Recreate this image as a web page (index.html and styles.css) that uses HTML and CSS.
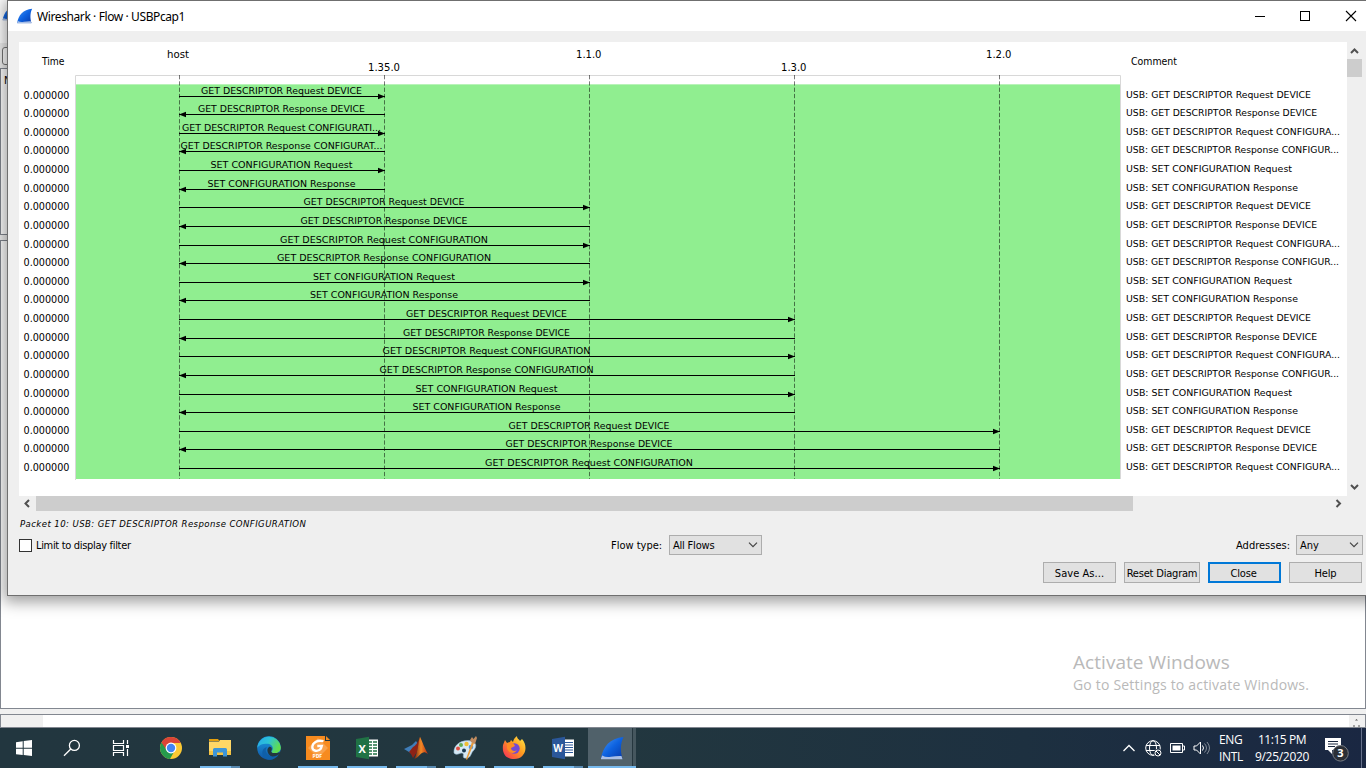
FILE: index.html
```html
<!DOCTYPE html>
<html lang="en">
<head>
<meta charset="utf-8">
<title>Wireshark · Flow · USBPcap1</title>
<link rel="stylesheet" href="styles.css">
</head>
<body>
<svg width="0" height="0" class="defs">
  <defs>
    <linearGradient id="fin" x1="0" y1="0" x2="1" y2="1"><stop offset="0" stop-color="#4a98f4"/><stop offset=".5" stop-color="#0d62e0"/><stop offset="1" stop-color="#0738a8"/></linearGradient>
    <linearGradient id="edgeA" x1="0" y1="0" x2="1" y2=".4"><stop offset="0" stop-color="#28a8ea"/><stop offset=".5" stop-color="#2cc3d8"/><stop offset="1" stop-color="#5fdc50"/></linearGradient>
    <linearGradient id="edgeB" x1="0" y1="0" x2="0" y2="1"><stop offset="0" stop-color="#1b9de2"/><stop offset="1" stop-color="#1055a5"/></linearGradient>
    <linearGradient id="fox" x1="1" y1="0" x2="0" y2="1"><stop offset="0" stop-color="#fff04a"/><stop offset=".45" stop-color="#ff9a1f"/><stop offset="1" stop-color="#f5245c"/></linearGradient>
    <linearGradient id="mat" x1="0" y1="0" x2="1" y2="0"><stop offset="0" stop-color="#6b1d12"/><stop offset=".5" stop-color="#f58a25"/><stop offset="1" stop-color="#b52a12"/></linearGradient>
    <symbol id="shark" viewBox="0 0 24 24"><path d="M1 22.500C2.500 11 10 2 23.500 1C20 8 20.500 16 22.500 22.500Z" fill="url(#fin)"/><path d="M1 22.500L2.200 19.500Q6 21.800 11 20.800T21.500 20L22.500 23.300H1Z" fill="#a9bfe6"/></symbol>
  </defs>
</svg>
<div class="desktop">
  <div class="backdrop">
    <div class="bd-head"><svg class="bd-fin" width="16" height="16"><use href="#shark"/></svg></div>
    <div class="bd-tools"><div class="bd-field"></div></div>
    <div class="bd-list">No.</div>
    <div class="bd-details">
      <div class="activate"><div class="act-title">Activate Windows</div><div class="act-sub">Go to Settings to activate Windows.</div></div>
    </div>
    <div class="bd-bytes"><div class="bd-gutter"></div><div class="bd-scroll"><svg width="15" height="12"><path d="M6 5.500L7.500 4L9 5.500ZM4 10.500h2v1h-2zM9 10.500h2v1h-2z" fill="#555"/></svg></div></div>
  </div>

  <div class="dialog">
    <div class="titlebar">
      <svg width="17" height="16"><use href="#shark"/></svg>
      <span class="title">Wireshark · Flow · USBPcap1</span>
      <svg class="winbtns" width="110" height="16" fill="none" stroke="#000"><path d="M3 8.500h10"/><rect x="48.500" y="3.500" width="9" height="9"/><path d="M94 3l10 10M104 3l-10 10" stroke-width="1.100"/></svg>
    </div>
    <div class="content">
      <div class="view">
        <svg id="diagram" width="1328" height="454" viewBox="19 42 1328 454"></svg>
        <div class="vscroll"><svg width="15" height="17" fill="none" stroke="#505050" stroke-width="2"><path d="M4 11l3.500-3.500L11 11"/></svg><div class="vthumb"></div><div class="grow"></div><svg width="15" height="17" fill="none" stroke="#505050" stroke-width="2"><path d="M4 6l3.500 3.500L11 6"/></svg></div>
      </div>
      <div class="hscroll"><svg width="17" height="15" fill="none" stroke="#505050" stroke-width="2"><path d="M10 4L6.500 7.500l3.500 3.500"/></svg><div class="hthumb"></div><div class="grow"></div><svg width="17" height="15" fill="none" stroke="#505050" stroke-width="2"><path d="M6.500 4L10 7.500L6.500 11"/></svg></div>
      <div class="status"><span>Packet 10: USB: GET DESCRIPTOR Response CONFIGURATION</span></div>
      <div class="options">
        <span class="check"></span><span class="limit">Limit to display filter</span>
        <span class="flow-label">Flow type:</span><span class="combo flow"><span class="t-all">All Flows</span><svg width="10" height="6" fill="none" stroke="#444" stroke-width="1.200"><path d="M1 .7l4 4l4-4"/></svg></span>
        <span class="grow"></span>
        <span class="addr-label">Addresses:</span><span class="combo addr"><span>Any</span><svg width="10" height="6" fill="none" stroke="#444" stroke-width="1.200"><path d="M1 .7l4 4l4-4"/></svg></span>
      </div>
      <div class="buttons"><span class="btn save">Save As...</span><span class="btn wide">Reset Diagram</span><span class="btn primary">Close</span><span class="btn">Help</span></div>
    </div>
  </div>

  <div class="taskbar">
    <div class="task first"><svg width="24" height="24"><path d="M4 6.300l6.700-1v6.400H4zM11.700 5.100L20 4v7.700h-8.300zM4 12.700h6.700v6.400L4 18.200zM11.700 12.700H20V20l-8.300-1.100z" fill="#fff"/></svg></div>
    <div class="task first"><svg width="24" height="24" fill="none" stroke="#fff" stroke-width="1.300"><circle cx="14.400" cy="9.400" r="5"/><path d="M10.800 13L4 19.800"/></svg></div>
    <div class="task view-btn"><svg width="24" height="24" fill="none" stroke="#fff" stroke-width="1.200"><path d="M4.500 4v3.500h10V4M4.500 20v-3.500h10V20M4.500 9.500h10v5h-10zM18.500 4v4M18.500 13v7"/><path d="M17 9h3v3h-3z" fill="#fff" stroke="none"/></svg></div>
    <div class="task"><svg width="24" height="24"><circle cx="12" cy="12" r="11" fill="#fbc934"/><path d="M12 12L2.500 6.500A11 11 0 0 0 11 23l5-9z" fill="#269a4c"/><path d="M12 7h9.800A11 11 0 0 0 2.500 6.500L7.600 14z" fill="#db4437"/><circle cx="12" cy="12" r="5.400" fill="#fff"/><circle cx="12" cy="12" r="4.200" fill="#4285f4"/></svg></div>
    <div class="task run multi"><svg width="24" height="24"><path d="M1 3h9l1.500 2H1z" fill="#e5a00d"/><path d="M1 5.500h10l1-1.500h11v15H1z" fill="#ffd766"/><path d="M1 15h22v4H1z" fill="#f4c342"/><path d="M5 20.500v-7q0-1.500 1.500-1.500h11q1.500 0 1.500 1.500v7h-4v-4H9v4z" fill="#3d95d7"/></svg></div>
    <div class="task"><svg width="24" height="24"><circle cx="12" cy="12" r="11.800" fill="url(#edgeB)"/><path d="M.3 12A11.800 11.800 0 0 1 23.800 11c.4 4-2.800 6.200-6.200 6.200-2.700 0-3.800-.9-2.700-2.200 2.800-4-1.300-7.500-5-7.300C5 7.800 1.600 9 .3 12z" fill="url(#edgeA)"/><path d="M12 11c1.600-.6 3 .6 2.800 2.200-.2 1.500-1.300 2-.2 3 1.500 1.300 5 1 8 0l1.400 3-4.500 5-4-3.300c-4.500-1.200-6.800-7.500-3.500-9.900z" fill="#22373f"/><path d="M9.900 11c-3 4 .2 9.800 6 9.500 2.600-.1 4.500-1 6-2.200-3 5.300-9 6.600-13 4.500-5-3-5-10 1-11.800z" fill="#0f5fa8"/></svg></div>
    <div class="task run"><svg width="24" height="24"><path d="M0 0h19v5h5v19H0z" fill="#f78b1f"/><path d="M20 0l4 4h-4z" fill="#f78b1f"/><path d="M12 2l10 10-10 10L2 12z" fill="#f9a24c"/><path d="M17.500 5.200C11 3.500 6.500 7 6.300 11c-.1 4 5.500 5.500 8.700 1.500l.8-2.500h-4.500" fill="none" stroke="#fff" stroke-width="2.300"/><text x="6.500" y="22" class="icon-text pdf">PDF</text></svg></div>
    <div class="task run"><svg width="24" height="24"><path d="M13 3.500h10v17H13z" fill="#fff"/><path d="M14 6h3m1 0h4M14 9h3m1 0h4M14 12h3m1 0h4M14 15h3m1 0h4M14 18h3m1 0h4" stroke="#207245" stroke-width="1.600"/><path d="M1 3l13-2.200v22.400L1 21z" fill="#207245"/><text x="3.600" y="16.500" class="icon-text">X</text></svg></div>
    <div class="task run multi"><svg width="24" height="24"><path d="M0 13l8-4 4-4 2 3-6 10-3-2z" fill="#3f7db8"/><path d="M5 16l4-5q4-2 7-10l-3 15-4 6-2-4z" fill="#8e2216"/><path d="M16 .7C18 5 21 13 24 18c-3-2-4-2-6-1-2 1-4 5-8 6 4-6 4-16 6-22.300z" fill="url(#mat)"/></svg></div>
    <div class="task run"><svg width="24" height="24"><path d="M1 17C0 9 9 3 18 5c7 2 5 7 2 10-3 4-2 8-9 7-2-2 1-4-2-5-3 0-5 3-8 0z" fill="#d5e8f4" stroke="#8fb3cc" stroke-width=".6"/><circle cx="5" cy="12.500" r="2" fill="#df5044"/><circle cx="8" cy="9" r="2" fill="#64ad55"/><circle cx="13.500" cy="8" r="2.200" fill="#f0be35"/><circle cx="11" cy="14.500" r="2" fill="#1b3a51"/><circle cx="18" cy="11" r="2.300" fill="#5297dd"/><path d="M19 6l2 1-7 17-1-1z" fill="#e99a38"/><path d="M17 4l2-3 1.500 2L23 0l1 2-2 6-4-2z" fill="#c28c60"/></svg></div>
    <div class="task run"><svg width="24" height="24"><path d="M3 4l2 3 3-1 1-2 2 2c1-4 3-5 4-6 0 3 2 3 3 5l2-2c7 8 3 20-8 20C3 23 0 17 1 9z" fill="url(#fox)"/><circle cx="12.500" cy="12.500" r="5.200" fill="#7449d4"/><path d="M5 7c5-1 7 0 8 3l-4 2c0 3 4 4 6 2-3 5-9 3-10-2z" fill="#ff8c24"/></svg></div>
    <div class="task run multi"><svg width="24" height="24"><path d="M13 3.500h10v17H13z" fill="#fff"/><path d="M14 6.500h8M14 9h8M14 11.500h8M14 14h8M14 16.500h8" stroke="#2b579a" stroke-width="1.100"/><path d="M1 3l13-2.200v22.400L1 21z" fill="#2b579a"/><text x="2.200" y="16" class="icon-text word">W</text></svg></div>
    <div class="task run active"><svg width="24" height="24"><use href="#shark"/></svg></div>
    <div class="grow"></div>
    <div class="tray">
      <svg width="14" height="16" fill="none" stroke="#fff" stroke-width="1.300"><path d="M1.500 11l5.500-5.500 5.500 5.500"/></svg>
      <svg class="globe" width="18" height="18" fill="none" stroke="#fff"><circle cx="8" cy="8" r="7.300"/><ellipse cx="8" cy="8" rx="3.500" ry="7.300"/><path d="M1 5.500h14M1 10.500h14"/><circle cx="13" cy="13" r="4" fill="#1b2b3e" stroke="none"/><circle cx="13" cy="13" r="3"/><path d="M11 11l4 4"/></svg>
      <svg class="batt" width="16" height="12"><path d="M.5 1.500h12v9H.5zM13 4h1.500v4H13" fill="none" stroke="#fff"/><path d="M2.500 3.500h8v5h-8z" fill="#fff"/></svg>
      <svg class="vol" width="18" height="16" fill="none" stroke="#fff"><path d="M1 6h2.500l4-4v12l-4-4H1z"/><path d="M9.500 5.500q2 2.500 0 5"/><path d="M11.500 3.500q4 4.500 0 9M14 2q5 6 0 12" opacity=".45"/></svg>
      <div class="lang"><span>ENG</span><span>INTL</span></div>
      <div class="clock"><span class="hour">11:15 PM</span><span>9/25/2020</span></div>
      <svg class="notif" width="27" height="27"><path d="M1 1h16v12h-9v4l-4-4H1z" fill="#fff"/><path d="M4 4.500h10M4 7h10M4 9.500h7" stroke="#1a2840"/><circle cx="16.500" cy="16.300" r="7.800" fill="#2b2f36" stroke="#777c84"/><text x="13.300" y="20.300" class="badge-num">3</text></svg>
      <div class="peek"></div>
    </div>
  </div>
</div>
<script src="flow.js"></script>
</body>
</html>
```
FILE: styles.css
```css
* { box-sizing: border-box; }
body { margin: 0; overflow: hidden; font-family: "DejaVu Sans Condensed", "DejaVu Sans", sans-serif; font-size: 11px; color: #000; }
svg { display: block; flex: none; }
.defs { position: absolute; }
.grow { flex: 1; }
.desktop { position: relative; width: 1366px; height: 768px; display: flex; flex-direction: column; background: #f0f0f0; overflow: hidden; }

/* main window behind the dialog */
.backdrop { flex: 1; min-height: 0; display: flex; flex-direction: column; overflow: hidden; }
.bd-head { height: 43px; flex: none; background: #fff; padding: 5px 0 0 2px; }
.bd-tools { height: 25px; flex: none; padding: 4px 0 0 2px; }
.bd-field { width: 30px; height: 18px; border: 1px solid #777; border-radius: 3px; background: #fff; }
.bd-list { height: 167px; flex: none; border: 1px solid #828790; background: #fff; padding: 5px 0 0 3px; }
.bd-details { height: 469px; margin-top: 5px; flex: none; border: 1px solid #828790; background: #fff; display: flex; align-items: flex-end; justify-content: flex-end; }
.bd-bytes { height: 14px; margin-top: 5px; flex: none; border: 1px solid #828790; background: #fff; display: flex; justify-content: space-between; }
.bd-gutter { width: 42px; background: #f0f0f0; }
.bd-scroll { width: 16px; background: #f0f0f0; }
.activate { width: 292px; height: 58px; font-family: "Open Sans", "Noto Sans", sans-serif; color: #b9b9b9; white-space: nowrap; }
.act-title { font-size: 19px; line-height: 25px; letter-spacing: .05px; }
.act-sub { font-size: 14px; line-height: 20px; letter-spacing: .19px; }

/* dialog */
.dialog { position: absolute; left: 7px; top: 0; width: 1370px; height: 596px; border: 1px solid #6f6f6f; background: #efefef; box-shadow: 0 3px 14px 3px rgba(0,0,0,.38); }
.titlebar { height: 30px; background: #fff; display: flex; align-items: center; padding-left: 8px; }
.title { margin-left: 4px; flex: 1; font-family: "Noto Sans", sans-serif; font-size: 12px; letter-spacing: -.4px; }
.winbtns { margin-right: 14px; }
.content { padding: 11px 0 0 11px; width: 1355px; }
.view { display: flex; height: 454px; }
#diagram { background: #fff; }
.vscroll { width: 15px; display: flex; flex-direction: column; }
.vthumb { height: 18px; background: #cdcdcd; }
.hscroll { width: 1328px; height: 15px; display: flex; }
.hthumb { width: 1097px; background: #cdcdcd; }
.status { height: 24px; display: flex; align-items: center; font-size: 9.5px; font-style: italic; letter-spacing: .42px; padding-left: 1px; }
.options { height: 20px; display: flex; align-items: center; white-space: nowrap; }
.check { width: 13px; height: 13px; border: 1px solid #333; background: #fff; margin-right: 4px; }
.limit { width: 575px; letter-spacing: -.32px; }
.flow-label { width: 58px; }
.t-all { letter-spacing: -.2px; }
.combo { height: 20px; border: 1px solid #adadad; background: #e1e1e1; display: flex; align-items: center; justify-content: space-between; padding: 0 3px; }
.combo.flow { width: 93px; }
.combo.addr { width: 67px; margin-left: 6px; }
.buttons { display: flex; justify-content: flex-end; gap: 8px; margin: 7px 1px 0 0; }
.btn { width: 73px; height: 21px; padding-top: 1px; border: 1px solid #adadad; background: #e1e1e1; display: flex; align-items: center; justify-content: center; white-space: nowrap; letter-spacing: -.15px; }
.btn.save { letter-spacing: .05px; }
.btn.wide { width: 76px; letter-spacing: -.2px; }
.btn.primary { border: 2px solid #0078d7; padding-right: 2px; }
.row-text { font-family: "DejaVu Sans", sans-serif; font-size: 9.2px; }
.head-text { font-size: 11px; }

/* taskbar */
.taskbar { height: 40px; flex: none; display: flex; background: linear-gradient(90deg, #22363f 0, #22373f 45%, #1d3040 75%, #1a2742 100%); color: #fff; z-index: 1; }
.task { width: 49px; height: 40px; position: relative; display: flex; align-items: center; justify-content: center; }
.task.first { width: 48px; }
.task.view-btn { width: 50px; padding-right: 1px; }
.task.run::after { content: ""; position: absolute; left: 5px; bottom: 0; width: 40px; height: 2px; background: #76b9ed; }
.task.multi::after { background: linear-gradient(90deg, #76b9ed 31px, #5889b0 31px); }
.task.active { background: linear-gradient(90deg, transparent 1px, #50616a 1px, #50616a 45px, #26373f 45px, #26373f 46px, #46575f 46px); }
.task.active::after { left: 1px; width: 48px; }
.icon-text { font: bold 11px "Open Sans", sans-serif; fill: #fff; }
.icon-text.pdf { font-size: 5px; }
.icon-text.word { font-size: 10px; }
.tray { display: flex; align-items: center; height: 40px; font-family: "Open Sans", "Noto Sans", sans-serif; font-size: 12px; line-height: 17px; letter-spacing: -.3px; }
.globe { margin: 1px 0 0 9px; }
.batt { margin-left: 7px; }
.vol { margin-left: 7px; }
.lang, .clock { display: flex; flex-direction: column; white-space: nowrap; }
.lang { width: 24px; margin-left: 8px; }
.clock { width: 54px; margin-left: 12px; align-items: center; }
.hour { letter-spacing: -.45px; }
.notif { margin: 5px 0 0 15px; }
.badge-num { font: bold 11px "Open Sans", sans-serif; fill: #fff; }
.peek { width: 5px; height: 40px; margin-left: 10px; border-left: 1px solid #66708a; }
```
FILE: flow.js
```js
(function () {
  var NS = 'http://www.w3.org/2000/svg';
  var svg = document.getElementById('diagram');

  function add(tag, attrs, text) {
    var el = document.createElementNS(NS, tag);
    for (var k in attrs) el.setAttribute(k, attrs[k]);
    if (text) el.textContent = text;
    svg.appendChild(el);
    return el;
  }
  function label(text, x, y, w, cls) {
    add('text', { x: x, y: y, textLength: w, lengthAdjust: 'spacingAndGlyphs', 'class': cls }, text);
  }

  var nodes = [179.5, 384.5, 589.5, 794.5, 999.5];

  add('rect', { x: 76, y: 84, width: 1044, height: 395, fill: '#90ee90' });
  add('path', { d: 'M75.500 480V75.500H1120.500V479', fill: 'none', stroke: '#d8d8d8' });
  add('path', { d: 'M76 84.500H1120', stroke: '#b9f3b9' });
  nodes.forEach(function (x) {
    add('path', { d: 'M' + x + ' 75V479', stroke: '#000', 'stroke-opacity': 0.52, 'stroke-dasharray': '4.3 2' });
  });

  label('Time', 42, 65, 22.5, 'head-text');
  label('host', 167, 58, 22, 'head-text');
  label('1.35.0', 368, 71, 32, 'head-text');
  label('1.1.0', 576, 58, 25.5, 'head-text');
  label('1.3.0', 781, 71, 25.5, 'head-text');
  label('1.2.0', 986, 58, 25.5, 'head-text');
  label('Comment', 1131, 65, 46, 'head-text');

  // Label text, width, comment text, comment width
  var kinds = [
    ['GET DESCRIPTOR Request DEVICE', 161, 'USB: GET DESCRIPTOR Request DEVICE', 185],
    ['GET DESCRIPTOR Response DEVICE', 167, 'USB: GET DESCRIPTOR Response DEVICE', 191],
    ['GET DESCRIPTOR Request CONFIGURATION', 208, 'USB: GET DESCRIPTOR Request CONFIGURA...', 214],
    ['GET DESCRIPTOR Response CONFIGURATION', 214, 'USB: GET DESCRIPTOR Response CONFIGUR...', 213],
    ['SET CONFIGURATION Request', 142, 'USB: SET CONFIGURATION Request', 166],
    ['SET CONFIGURATION Response', 148, 'USB: SET CONFIGURATION Response', 172]
  ];
  var clipped = { 2: ['GET DESCRIPTOR Request CONFIGURATI...', 199], 3: ['GET DESCRIPTOR Response CONFIGURAT...', 202] };
  var ys = [96, 114, 133, 151, 170, 189, 207, 226, 245, 263, 282, 300, 319, 338, 356, 375, 394, 412, 431, 449, 468];

  ys.forEach(function (y, i) {
    var kind = i % 6;
    var k = kinds[kind];
    var short = i < 6 && clipped[kind];
    var name = short ? short[0] : k[0];
    var w = short ? short[1] : k[1];
    var end = nodes[1 + Math.floor(i / 6)];
    var mid = (nodes[0] + end) / 2 - 0.5;
    var ly = y + 0.5;

    add('path', { d: 'M179 ' + ly + 'H' + (end + 0.5), stroke: '#000' });
    if (i % 2) add('path', { d: 'M179 ' + ly + 'l7 -2.800v5.600z' });
    else add('path', { d: 'M' + (end + 0.5) + ' ' + ly + 'l-7 -2.800v5.600z' });

    label('0.000000', 23.5, y + 3, 46, 'head-text');
    label(name, mid - w / 2, y - 2, w, 'row-text');
    label(k[2], 1126, y + 2, k[3], 'row-text');
  });
})();
```
